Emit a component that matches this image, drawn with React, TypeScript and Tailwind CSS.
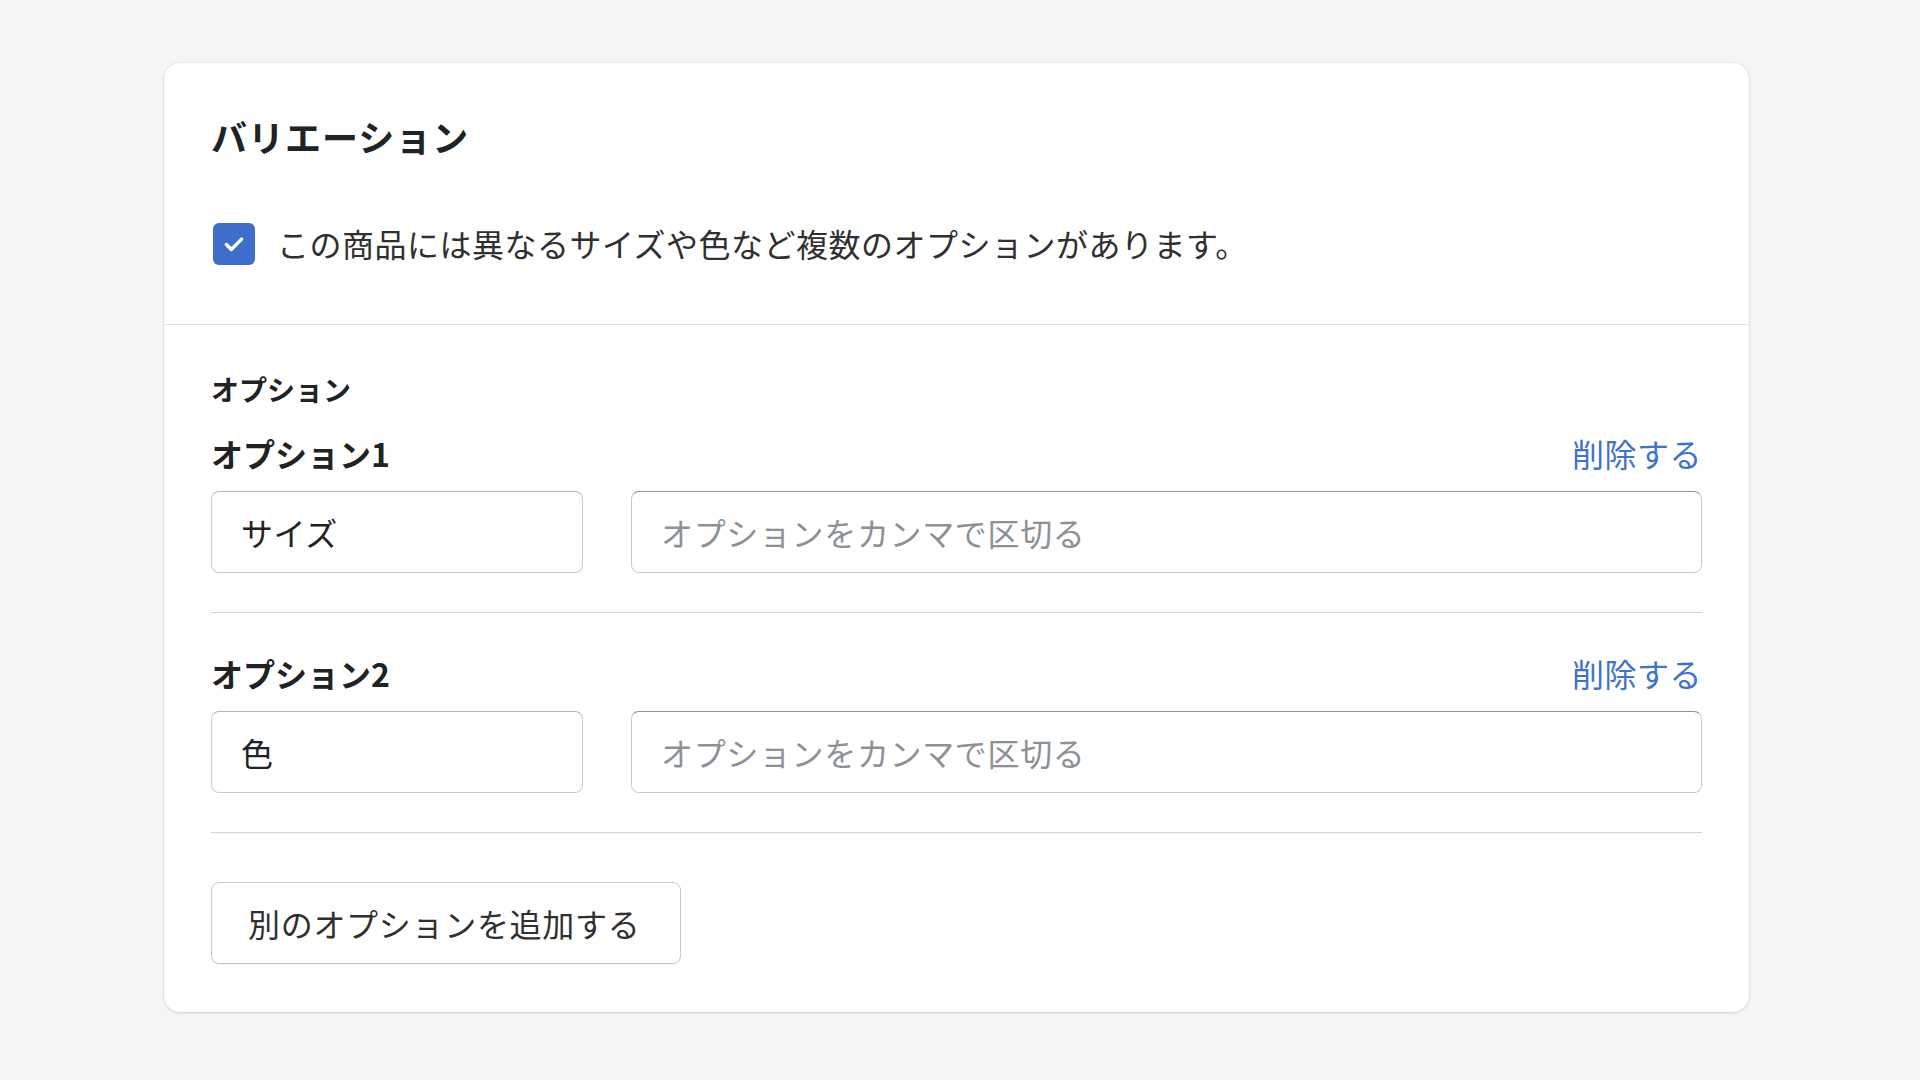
import React from "react";

const font = { fontFamily: '"Noto Sans CJK JP", "Noto Sans", sans-serif' };

function OptionRow({ label, value }: { label: string; value: string }) {
  return (
    <div className="flex flex-col">
      <div className="flex items-center justify-between h-[44px]">
        <span className="text-[32px] font-bold leading-[44px] text-[#202223]">{label}</span>
        <a className="text-[32px] leading-[44px] tracking-[0.5px] text-[#3f72cc] cursor-pointer">削除する</a>
      </div>
      <div className="flex gap-[48px] mt-[16px]">
        <div className="w-[372px] h-[82px] flex items-center px-[29px] rounded-[8px] border border-[#c9cccf] border-t-[#aeb4b9] bg-white text-[32px] leading-[44px] tracking-[0.6px] text-[#202223]">
          {value}
        </div>
        <div className="flex-1 h-[82px] flex items-center px-[29px] rounded-[8px] border border-[#c9cccf] border-t-[#8c9196] bg-white text-[32px] leading-[44px] tracking-[0.65px] text-[#8c9196]">
          オプションをカンマで区切る
        </div>
      </div>
    </div>
  );
}

export default function App() {
  return (
    <div className="w-[1920px] h-[1080px] bg-[#f5f5f7] pt-[63px] pl-[164px]" style={font}>
      <div className="w-[1585px] bg-white rounded-[16px] shadow-[0_1px_3px_rgba(0,0,0,0.12),0_0_0_1px_rgba(0,0,0,0.03)]">
        <div className="px-[47px] pt-[48px] pb-[59px]">
          <h2 className="text-[36px] font-bold leading-[50px] tracking-[1px] text-[#202223]">バリエーション</h2>
          <div className="flex items-center mt-[62px] h-[42px]">
            <div className="w-[42px] h-[42px] rounded-[6px] bg-[#3d6ecc] flex items-center justify-center ml-[2px]">
              <svg width="26" height="26" viewBox="0 0 24 24" fill="none">
                <path d="M5 12.5l4.5 4.5L19 7.5" stroke="white" strokeWidth="3.2" strokeLinecap="round" strokeLinejoin="round" />
              </svg>
            </div>
            <span className="ml-[22px] -mt-[3px] text-[32px] leading-[44px] tracking-[0.5px] text-[#303030]">
              この商品には異なるサイズや色など複数のオプションがあります。
            </span>
          </div>
        </div>
        <div className="border-t border-[#e1e3e5]" />
        <div className="px-[47px] pt-[44px] pb-[48px]">
          <div className="text-[28px] font-bold leading-[40px] text-[#202223]">オプション</div>
          <div className="mt-[22px]">
            <OptionRow label="オプション1" value="サイズ" />
          </div>
          <div className="border-t border-[#d2d5d8] mt-[39px]" />
          <div className="mt-[38px]">
            <OptionRow label="オプション2" value="色" />
          </div>
          <div className="border-t border-[#d2d5d8] mt-[39px]" />
          <button className="mt-[49px] w-[470px] h-[82px] px-[36px] text-left whitespace-nowrap rounded-[8px] border border-[#c9cccf] bg-white text-[32px] leading-[44px] tracking-[0.7px] text-[#303030] shadow-[0_1px_0_rgba(0,0,0,0.05)]">
            別のオプションを追加する
          </button>
        </div>
      </div>
    </div>
  );
}
